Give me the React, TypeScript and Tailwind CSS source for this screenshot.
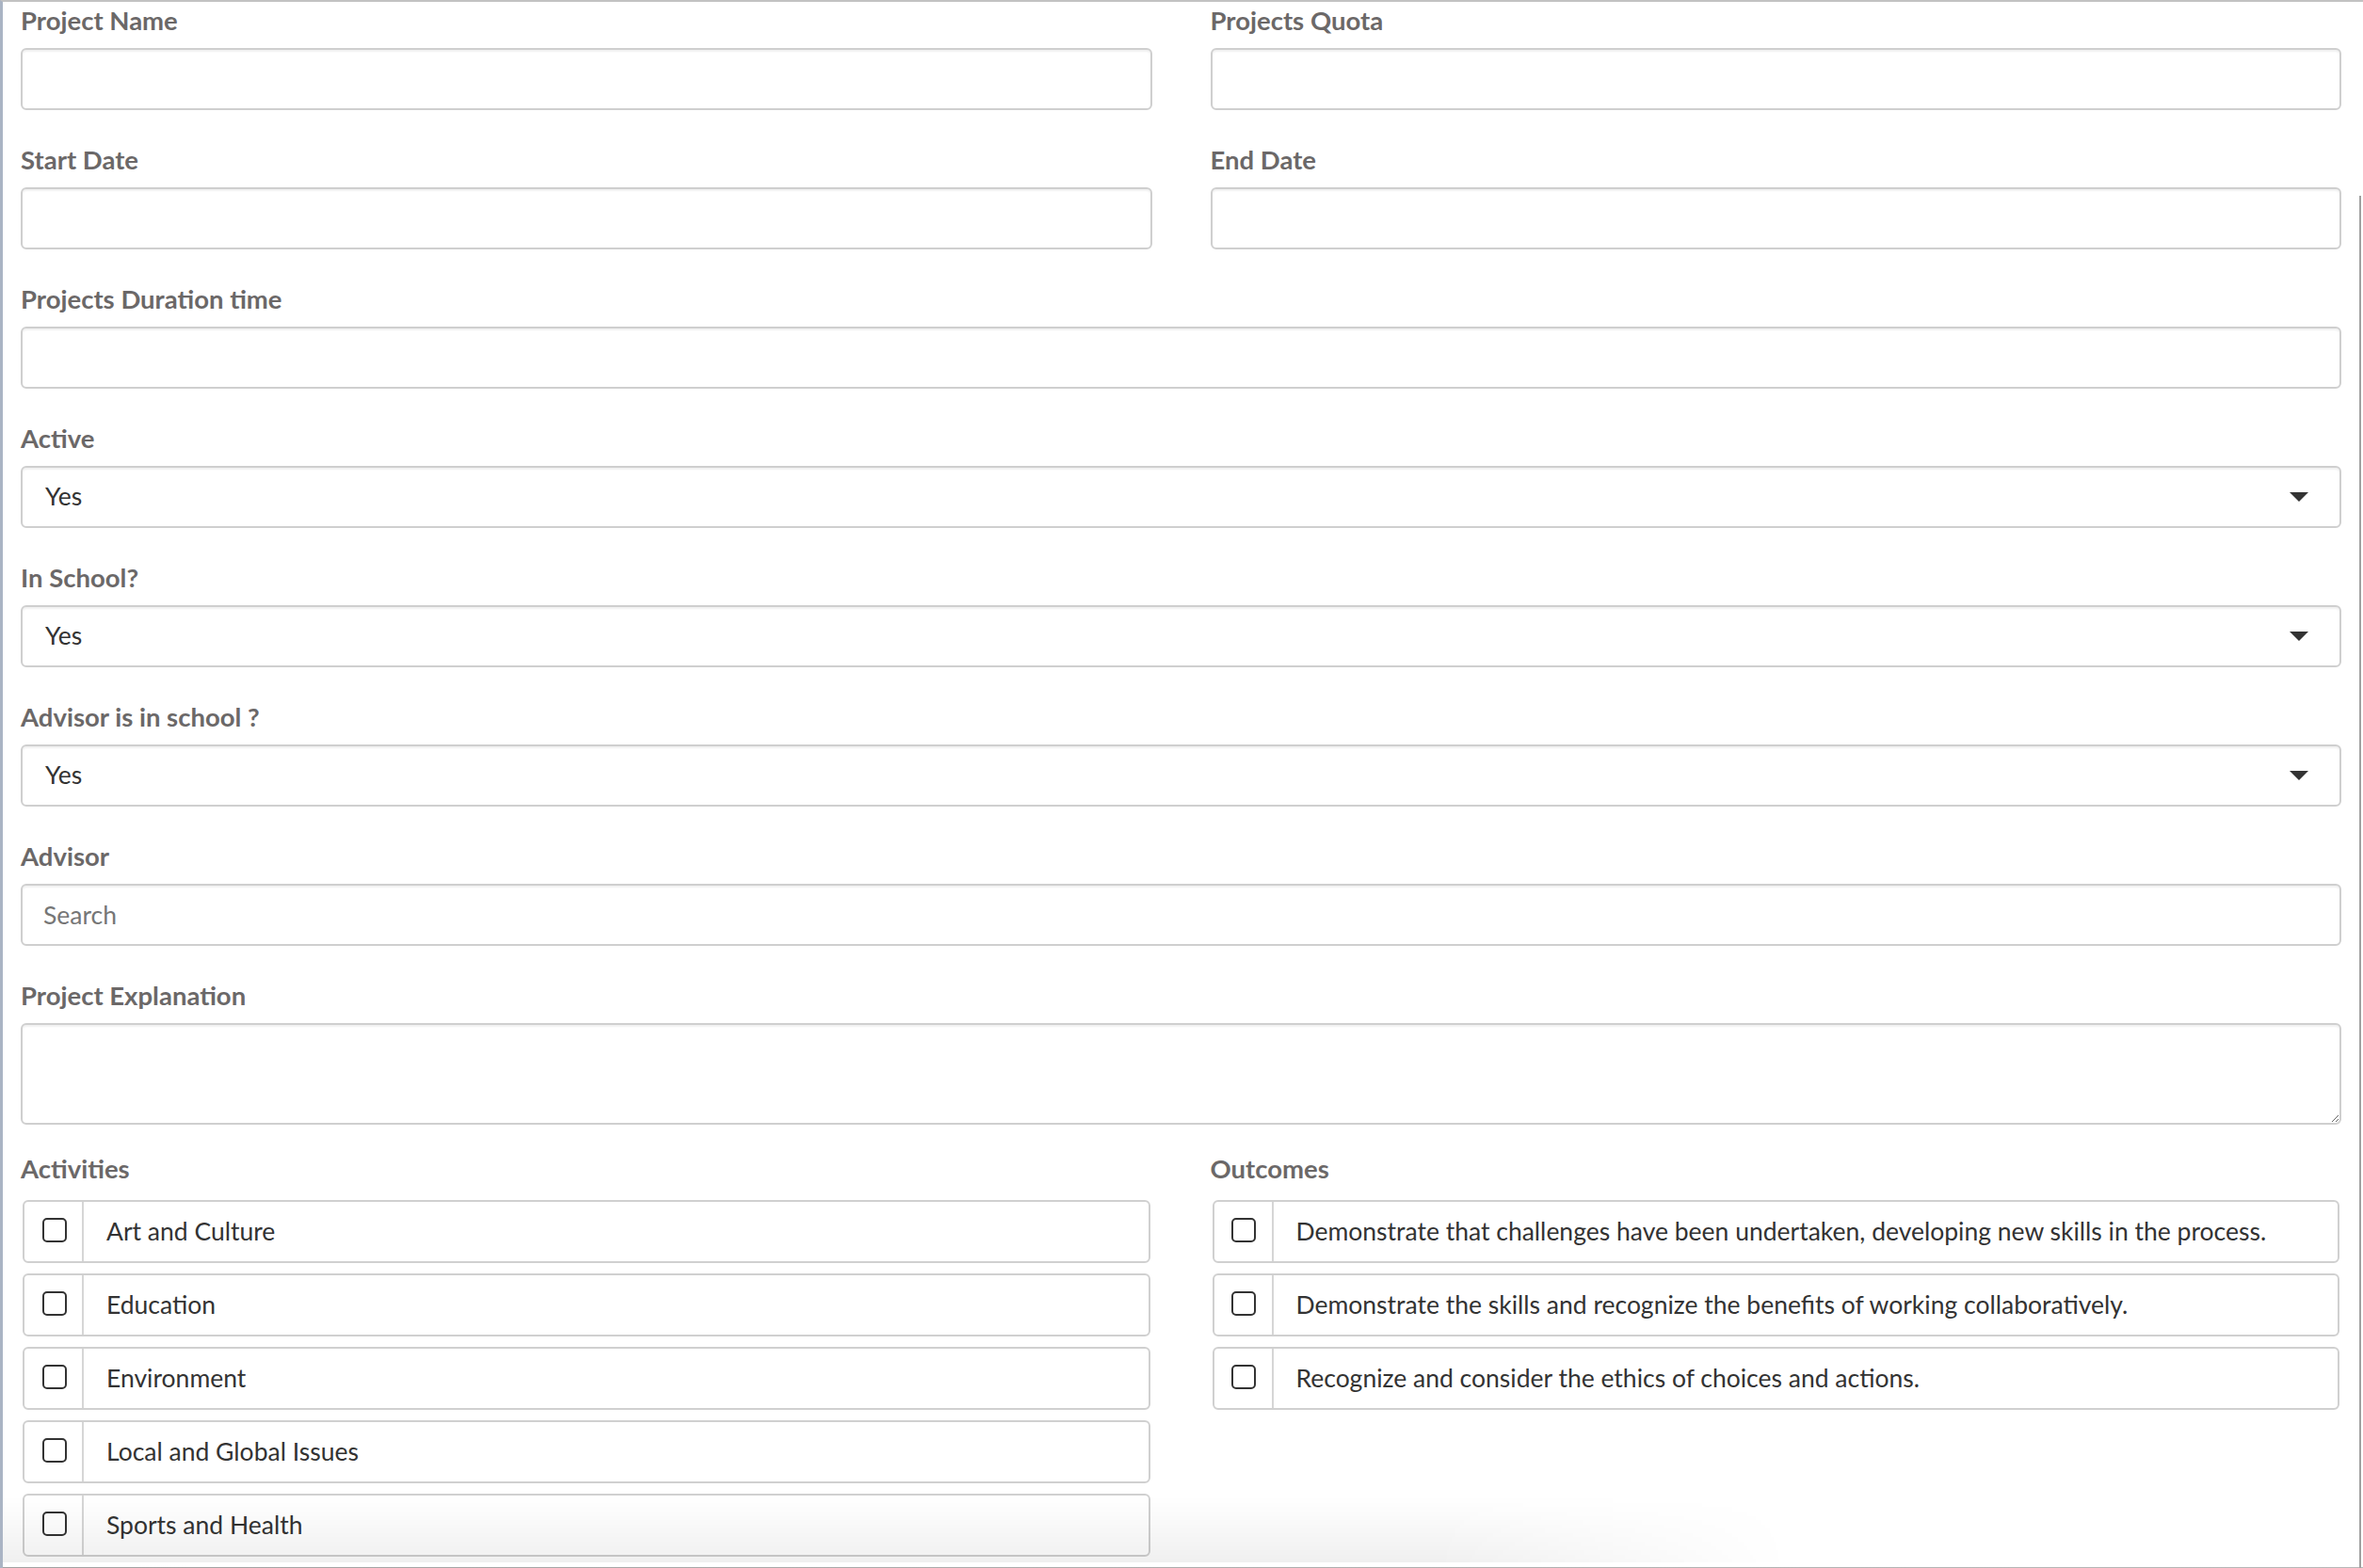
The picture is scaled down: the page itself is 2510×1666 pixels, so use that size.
import React from 'react';

const labelCls = 'block h-[40px] leading-[40px] text-[27.5px] font-bold text-[#6b6868]';
const boxCls =
  'h-[66px] w-full rounded-[6px] border-2 border-[#cfcfcf] bg-white shadow-[inset_0_2px_2px_rgba(0,0,0,0.06)]';

function Field({ label, children }: { label: string; children: React.ReactNode }) {
  return (
    <div className="mb-[33px]">
      <label className={`${labelCls} mb-[9px]`}>{label}</label>
      {children}
    </div>
  );
}

function TextBox({ placeholder }: { placeholder?: string }) {
  return (
    <input
      type="text"
      placeholder={placeholder}
      className={`${boxCls} block px-[22px] text-[26.5px] text-[#333] outline-none placeholder:text-[#767676]`}
    />
  );
}

function SelectBox({ value }: { value: string }) {
  return (
    <div className={`${boxCls} flex items-center justify-between pl-[24px] pr-[33px] text-[26.5px] text-[#333]`}>
      <span>{value}</span>
      <svg width="20" height="10" viewBox="0 0 20 10">
        <path d="M0 0 L20 0 L10 10 Z" fill="#333" />
      </svg>
    </div>
  );
}

function CheckRow({ text }: { text: string }) {
  return (
    <div className="mb-[11px] flex h-[67px] items-stretch rounded-[6px] border-2 border-[#d0d0d0] bg-white">
      <div className="flex w-[63px] shrink-0 items-center justify-center border-r-2 border-[#d6d6d6]">
        <input
          type="checkbox"
          className="mt-[-4px] ml-[2px] h-[26px] w-[26px] appearance-none rounded-[5px] border-[2.5px] border-[#333] bg-white"
        />
      </div>
      <div className="flex items-center pl-[24px] text-[26.5px] text-[#333]">{text}</div>
    </div>
  );
}

const activities = ['Art and Culture', 'Education', 'Environment', 'Local and Global Issues', 'Sports and Health'];
const outcomes = [
  'Demonstrate that challenges have been undertaken, developing new skills in the process.',
  'Demonstrate the skills and recognize the benefits of working collaboratively.',
  'Recognize and consider the ethics of choices and actions.',
];

export default function App() {
  return (
    <div
      className="relative flex h-[1666px] w-[2510px] flex-col overflow-hidden border-t-2 border-l-[3px] border-t-[#c2c2c2] border-l-[#aab4c4] bg-white"
      style={{ fontFamily: 'Lato, "Open Sans", sans-serif' }}
    >
      <form className="pl-[19px] pr-[23px]">
        <div className="grid grid-cols-2 gap-x-[62px]">
          <Field label="Project Name">
            <TextBox />
          </Field>
          <Field label="Projects Quota">
            <TextBox />
          </Field>
          <Field label="Start Date">
            <TextBox />
          </Field>
          <Field label="End Date">
            <TextBox />
          </Field>
        </div>

        <Field label="Projects Duration time">
          <TextBox />
        </Field>
        <Field label="Active">
          <SelectBox value="Yes" />
        </Field>
        <Field label="In School?">
          <SelectBox value="Yes" />
        </Field>
        <Field label="Advisor is in school ?">
          <SelectBox value="Yes" />
        </Field>
        <Field label="Advisor">
          <TextBox placeholder="Search" />
        </Field>

        <div className="mb-[27px]">
          <label className={`${labelCls} mb-[9px]`}>Project Explanation</label>
          <textarea className="block h-[108px] w-full resize-y rounded-[6px] border-2 border-[#cfcfcf] bg-white px-[22px] py-[10px] text-[26.5px] text-[#333] shadow-[inset_0_2px_2px_rgba(0,0,0,0.06)] outline-none" />
        </div>

        <div className="grid grid-cols-2 gap-x-[62px]">
          <div>
            <label className={`${labelCls} mb-[13px]`}>Activities</label>
            <div className="px-[2px]">
              {activities.map((a) => (
                <CheckRow key={a} text={a} />
              ))}
            </div>
          </div>
          <div>
            <label className={`${labelCls} mb-[13px]`}>Outcomes</label>
            <div className="px-[2px]">
              {outcomes.map((o) => (
                <CheckRow key={o} text={o} />
              ))}
            </div>
          </div>
        </div>
      </form>

      <div className="flex-1" />
      <div className="h-[6px] w-full bg-linear-to-r from-[#a2a2a2] to-[#b8b8b8]" />

      {/* window edge on the right */}
      <div className="pointer-events-none absolute right-[2px] top-[206px] bottom-0 w-[2px] bg-[#a0a0a0]" />
      {/* soft shadow at the bottom */}
      <div className="pointer-events-none absolute bottom-[6px] left-0 h-[70px] w-[1900px] bg-linear-to-b from-transparent to-black/[0.06] [mask-image:linear-gradient(to_right,black_80%,transparent)]" />
    </div>
  );
}
